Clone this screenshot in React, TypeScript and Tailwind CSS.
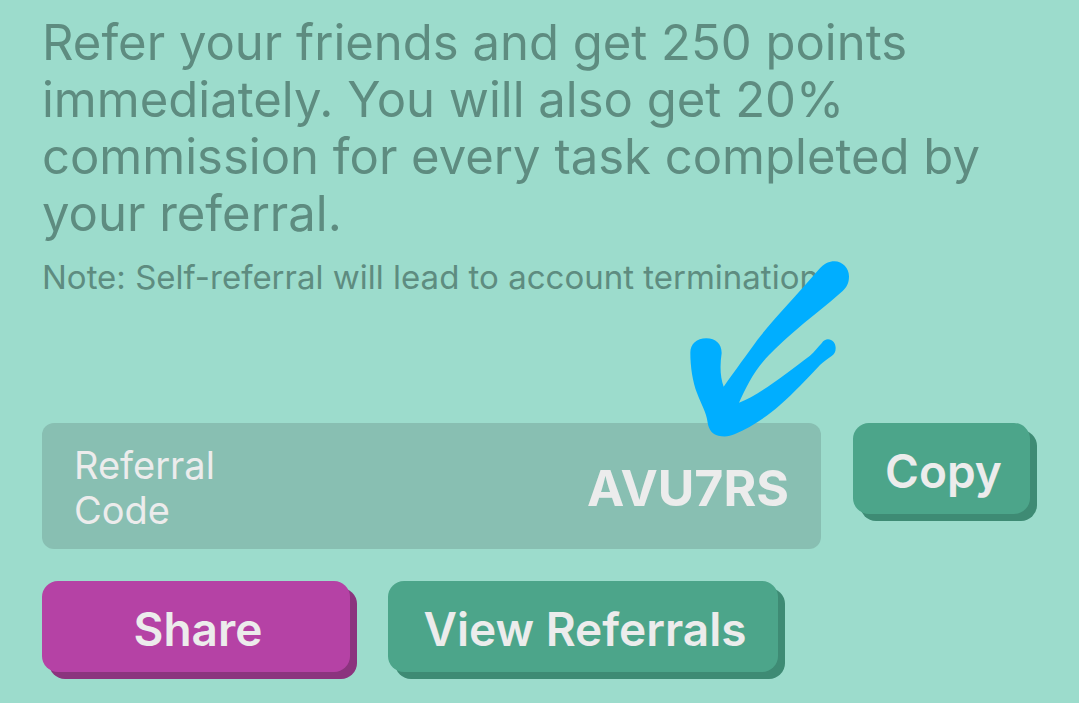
import { useState } from 'react';
import type { ButtonHTMLAttributes } from 'react';
import clsx from 'clsx';

const REFERRAL_CODE = 'AVU7RS';

type ActionButtonProps = ButtonHTMLAttributes<HTMLButtonElement> & {
  tone?: 'green' | 'purple';
};

function ActionButton({ tone = 'green', className, ...props }: ActionButtonProps) {
  return (
    <button
      type="button"
      className={clsx(
        'h-[91px] shrink-0 cursor-pointer rounded-2xl pt-1.5 pl-1 text-[46px] font-semibold whitespace-nowrap text-[#ececec]',
        tone === 'green' && 'bg-[#4ca58a] shadow-[7px_7px_0_#3e8b74]',
        tone === 'purple' && 'bg-[#b542a5] shadow-[7px_7px_0_#8b347e]',
        className,
      )}
      {...props}
    />
  );
}

// Hand-drawn arrow that points down at the code
function Arrow() {
  return (
    <svg
      aria-hidden="true"
      viewBox="30 33 480 528"
      className="pointer-events-none absolute -right-[29px] bottom-28 h-[176px] w-[160px]"
    >
      <path
        fill="#00aeff"
        d="M131 410 C165 362 203 310 232 270 C275 214 350 135 415 60 C432 40 448 34 463 34 C488 34 507 55 507 79 C507 100 500 112 488 123 C440 166 385 207 335 251 C300 282 270 310 249 335 C217 372 196 417 177 458 C236 436 320 370 389 318 C404 306 415 290 425 280 C431 271 437 268 444 268 C457 268 467 280 467 294 C467 306 463 313 455 318 C442 327 430 336 420 345 C378 390 344 426 300 465 C260 501 210 533 165 552 C148 560 132 561 115 557 C96 552 86 538 83 518 C79 486 63 462 51 429 C38 395 31 350 31 308 C31 282 50 265 79 265 C107 265 125 282 125 309 C119 348 121 383 131 410 Z"
      />
    </svg>
  );
}

export default function App() {
  const [, setCopied] = useState(false);

  const copy = async () => {
    try {
      await navigator.clipboard.writeText(REFERRAL_CODE);
      setCopied(true);
    } catch {
      setCopied(false);
    }
  };

  return (
    <main className="min-h-screen bg-[#9cdccc] px-[42px] pt-[14px] pb-6 font-['Inter','Open_Sans',sans-serif]">
      <p className="text-[49px] leading-[57px] font-normal text-[#5e8c80]">
        Refer your friends and get 250 points immediately. You will also get 20% commission for every task
        completed by your referral.
      </p>
      <p className="mt-4 text-[33px] leading-[39px] font-normal text-[#5e8c80]">
        Note: Self-referral will lead to account termination
      </p>

      <div className="mt-[126px] flex items-start gap-8">
        <div className="relative flex min-w-0 flex-1 items-center justify-between rounded-xl bg-[#88bfb2] px-8 pt-5 pb-4 text-[#ececec]">
          <span className="w-36 text-[38px] leading-[45px] font-normal">Referral Code</span>
          <strong className="text-[50px] leading-[57px] font-bold">{REFERRAL_CODE}</strong>
          <Arrow />
        </div>
        <ActionButton className="mr-[7px] w-[177px]" onClick={copy}>
          Copy
        </ActionButton>
      </div>

      <div className="mt-8 flex flex-wrap gap-[38px]">
        <ActionButton tone="purple" className="w-[308px]">
          Share
        </ActionButton>
        <ActionButton className="w-[390px]">View Referrals</ActionButton>
      </div>
    </main>
  );
}
